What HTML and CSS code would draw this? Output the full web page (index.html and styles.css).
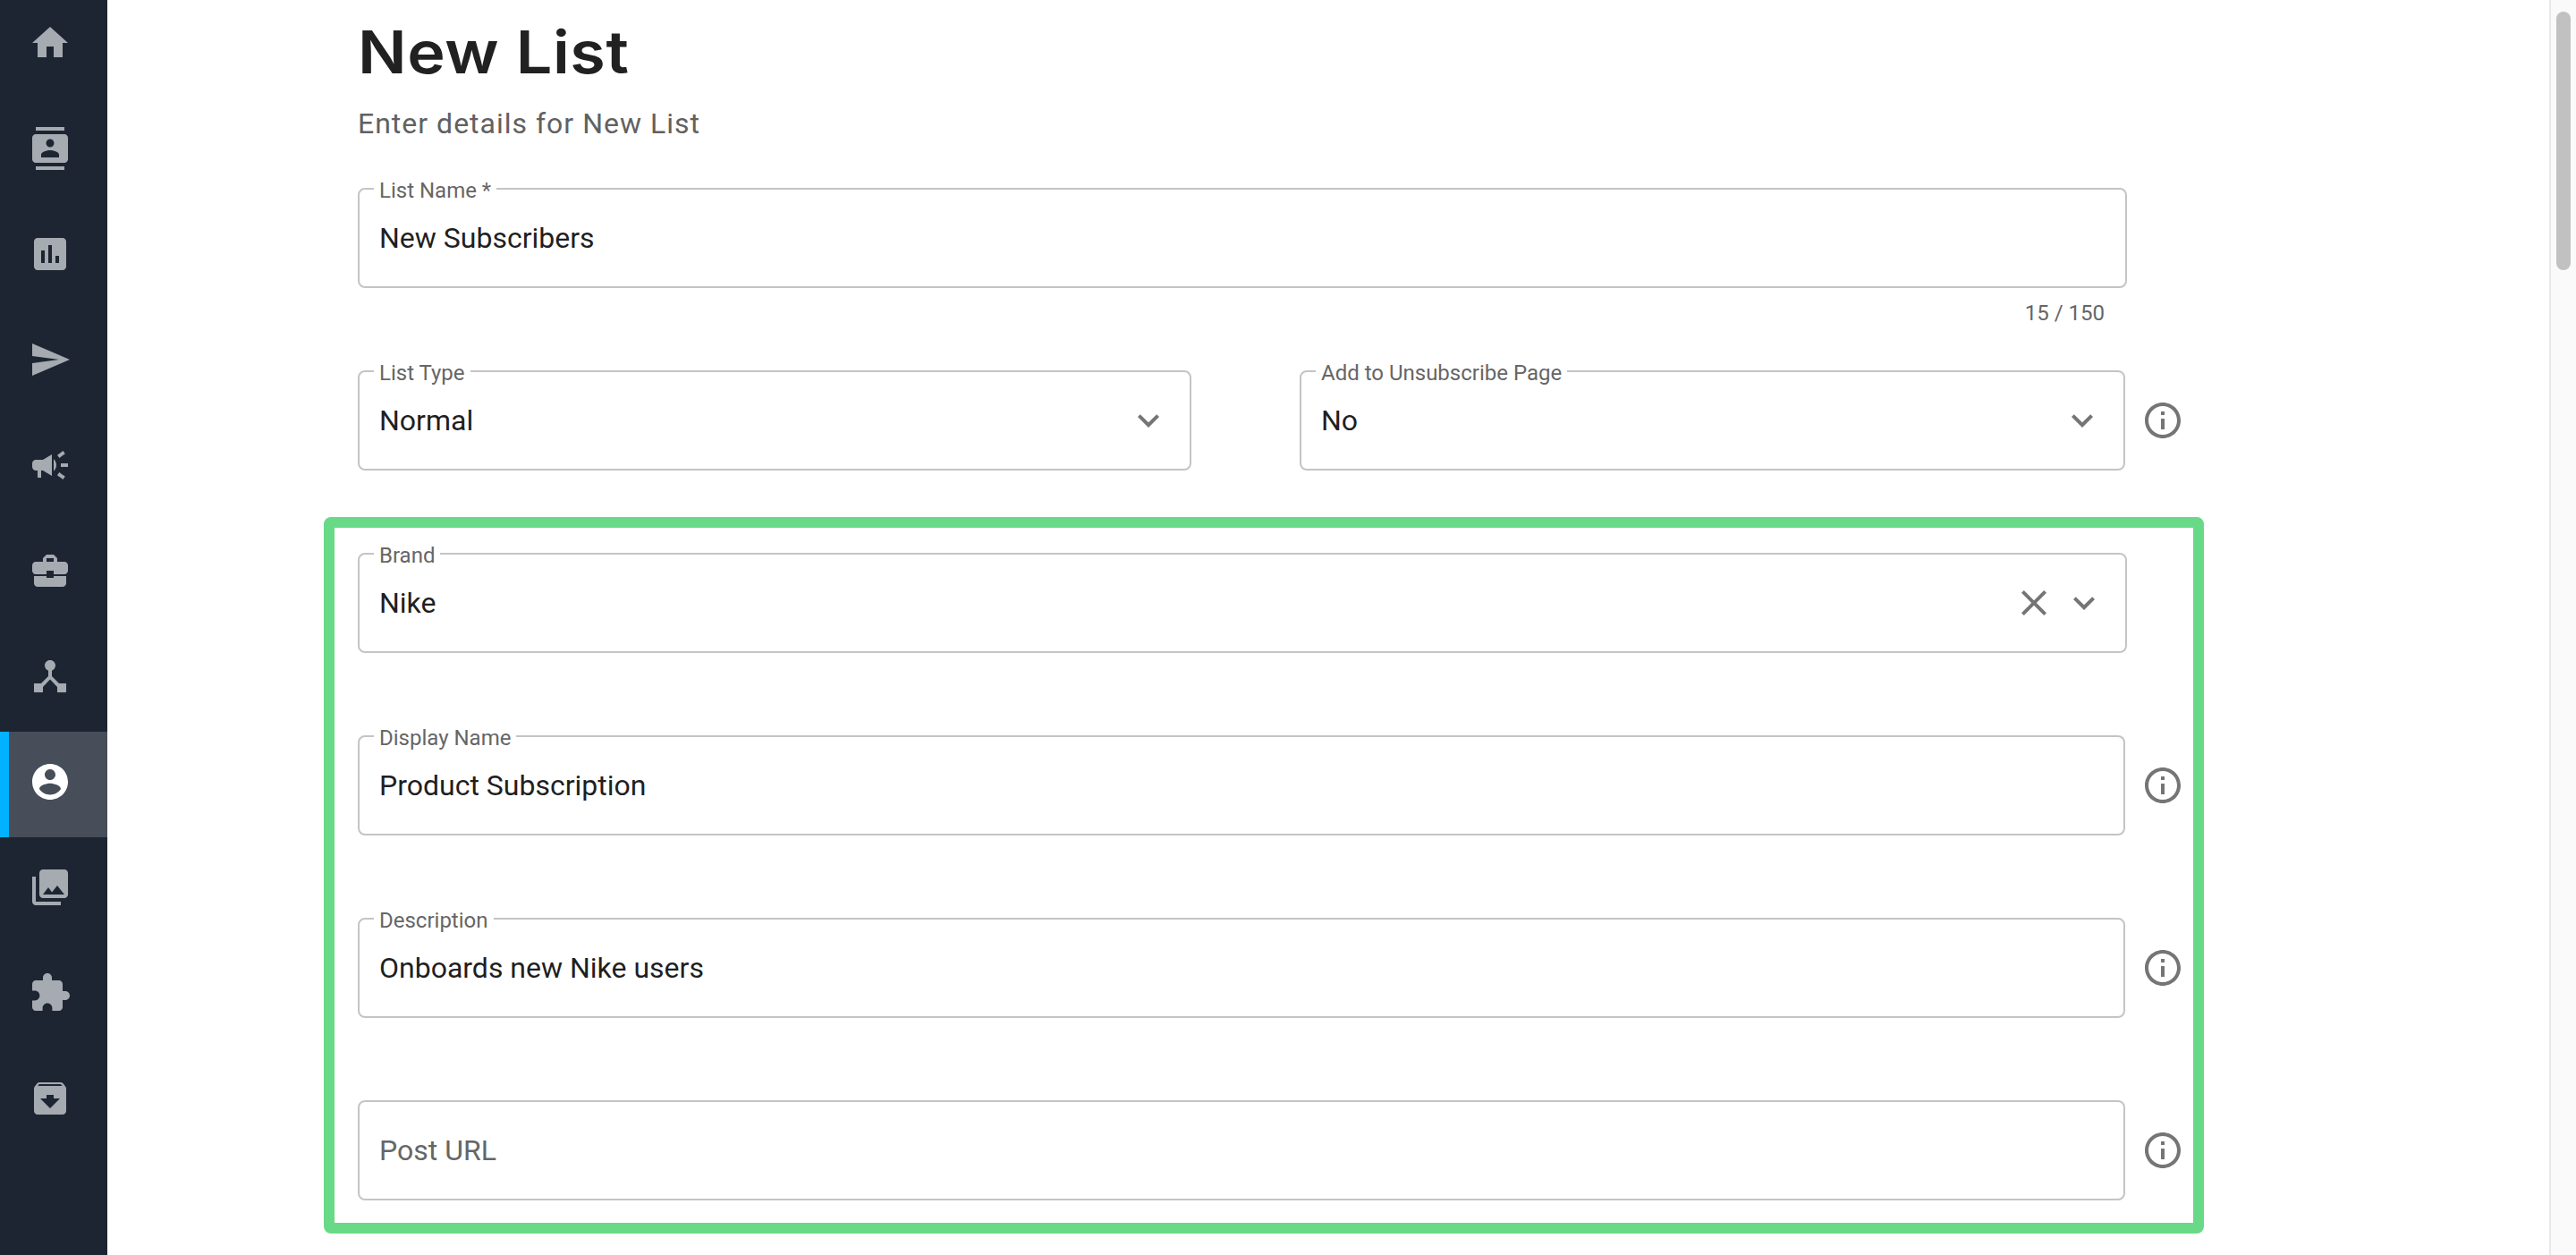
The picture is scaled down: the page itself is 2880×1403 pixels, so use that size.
FILE: index.html
```html
<!DOCTYPE html>
<html lang="en">
<head>
<meta charset="utf-8">
<title>New List</title>
<link rel="stylesheet" href="styles.css">
</head>
<body>
<svg class="defs" aria-hidden="true">
  <symbol id="i-info" viewBox="0 0 24 24"><path d="M11 7h2v2h-2zm0 4h2v6h-2zm1-9C6.48 2 2 6.48 2 12s4.48 10 10 10 10-4.48 10-10S17.52 2 12 2zm0 18c-4.41 0-8-3.59-8-8s3.59-8 8-8 8 3.59 8 8-3.59 8-8 8z"/></symbol>
  <symbol id="i-chevron" viewBox="0 0 24 24"><path d="M16.59 8.59L12 13.17 7.41 8.59 6 10l6 6 6-6z"/></symbol>
  <symbol id="i-close" viewBox="0 0 24 24"><path d="M19 6.41L17.59 5 12 10.59 6.41 5 5 6.41 10.59 12 5 17.59 6.41 19 12 13.41 17.59 19 19 17.59 13.41 12z"/></symbol>
</svg>

<nav class="sidebar">
  <a class="nav-item"><svg class="nav-icon" viewBox="0 0 24 24"><path d="M10 20v-6h4v6h5v-8h3L12 3 2 12h3v8z"/></svg></a>
  <a class="nav-item"><svg class="nav-icon" viewBox="0 0 24 24"><path d="M20 0H4v2h16V0zM4 24h16v-2H4v2zM20 4H4c-1.1 0-2 .9-2 2v12c0 1.1.9 2 2 2h16c1.1 0 2-.9 2-2V6c0-1.1-.9-2-2-2zm-8 2.75c1.24 0 2.25 1.01 2.25 2.25s-1.01 2.25-2.25 2.25S9.75 10.24 9.75 9 10.76 6.75 12 6.75zM17 17H7v-1.5c0-1.67 3.33-2.5 5-2.5s5 .83 5 2.5V17z"/></svg></a>
  <a class="nav-item"><svg class="nav-icon" viewBox="0 0 24 24"><path d="M19 3H5c-1.1 0-2 .9-2 2v14c0 1.1.9 2 2 2h14c1.1 0 2-.9 2-2V5c0-1.1-.9-2-2-2zM9 17H7v-7h2v7zm4 0h-2V7h2v10zm4 0h-2v-4h2v4z"/></svg></a>
  <a class="nav-item"><svg class="nav-icon" viewBox="0 0 24 24"><path d="M2.01 21L23 12 2.01 3 2 10l15 2-15 2z"/></svg></a>
  <a class="nav-item"><svg class="nav-icon" viewBox="0 0 24 24"><path d="M18 11v2h4v-2h-4zm-2 6.61c.96.71 2.21 1.65 3.2 2.39.4-.53.8-1.07 1.2-1.6-.99-.74-2.24-1.68-3.2-2.4-.4.54-.8 1.08-1.2 1.61zM20.4 5.6c-.4-.53-.8-1.07-1.2-1.6-.99.74-2.24 1.68-3.2 2.4.4.53.8 1.07 1.2 1.6.96-.72 2.21-1.65 3.2-2.4zM4 9c-1.1 0-2 .9-2 2v2c0 1.1.9 2 2 2h1v4h2v-4h1l5 3V6L8 9H4zm11.5 3c0-1.33-.58-2.53-1.5-3.35v6.69c.92-.81 1.5-2.01 1.5-3.34z"/></svg></a>
  <a class="nav-item"><svg class="nav-icon" viewBox="0 0 24 24"><path d="M10 16v-1H3.01L3 19c0 1.11.89 2 2 2h14c1.11 0 2-.89 2-2v-4h-7v1h-4zm10-9h-4.01V5l-2-2h-4l-2 2v2H4c-1.1 0-2 .9-2 2v3c0 1.11.89 2 2 2h6v-2h4v2h6c1.1 0 2-.9 2-2V9c0-1.1-.9-2-2-2zm-6 0h-4V5h4v2z"/></svg></a>
  <a class="nav-item"><svg class="nav-icon" viewBox="0 0 24 24"><path d="M17 16l-4-4V8.82C14.16 8.4 15 7.3 15 6c0-1.66-1.34-3-3-3S9 4.34 9 6c0 1.3.84 2.4 2 2.82V12l-4 4H3v5h5v-3.05l4-4.2 4 4.2V21h5v-5h-4z"/></svg></a>
  <a class="nav-item is-active"><svg class="nav-icon" viewBox="0 0 24 24"><path d="M12 2C6.48 2 2 6.48 2 12s4.48 10 10 10 10-4.48 10-10S17.52 2 12 2zm0 3c1.66 0 3 1.34 3 3s-1.34 3-3 3-3-1.34-3-3 1.34-3 3-3zm0 14.2c-2.5 0-4.71-1.28-6-3.22.03-1.99 4-3.08 6-3.08 1.99 0 5.97 1.09 6 3.08-1.29 1.94-3.5 3.22-6 3.22z"/></svg></a>
  <a class="nav-item"><svg class="nav-icon" viewBox="0 0 24 24"><path d="M22 16V4c0-1.1-.9-2-2-2H8c-1.1 0-2 .9-2 2v12c0 1.1.9 2 2 2h12c1.1 0 2-.9 2-2zm-11-4l2.03 2.71L16 11l4 5H8l3-4zM2 6v14c0 1.1.9 2 2 2h14v-2H4V6H2z"/></svg></a>
  <a class="nav-item"><svg class="nav-icon" viewBox="0 0 24 24"><path d="M20.5 11H19V7c0-1.1-.9-2-2-2h-4V3.5C13 2.12 11.88 1 10.5 1S8 2.12 8 3.5V5H4c-1.1 0-1.99.9-1.99 2v3.8H3.5c1.49 0 2.7 1.21 2.7 2.7s-1.21 2.7-2.7 2.7H2V20c0 1.1.9 2 2 2h3.8v-1.5c0-1.49 1.21-2.7 2.7-2.7 1.49 0 2.7 1.21 2.7 2.7V22H17c1.1 0 2-.9 2-2v-4h1.5c1.38 0 2.5-1.12 2.5-2.5S21.88 11 20.5 11z"/></svg></a>
  <a class="nav-item"><svg class="nav-icon" viewBox="0 0 24 24"><path d="M20.54 5.23l-1.39-1.68C18.88 3.21 18.47 3 18 3H6c-.47 0-.88.21-1.16.55L3.46 5.23C3.17 5.57 3 6.02 3 6.5V19c0 1.1.9 2 2 2h14c1.1 0 2-.9 2-2V6.5c0-.48-.17-.93-.46-1.27zM12 17.5L6.5 12H10v-2h4v2h3.5L12 17.5zM5.12 5l.81-1h12l.94 1H5.12z"/></svg></a>
</nav>

<main class="main">
  <h1 class="title">New List</h1>
  <p class="subtitle">Enter details for New List</p>

  <div class="block-name">
    <div class="field field-full">
      <span class="label">List Name *</span>
      <span class="value">New Subscribers</span>
    </div>
    <div class="counter">15 / 150</div>
  </div>

  <div class="row row-selects">
    <div class="field field-type">
      <span class="label">List Type</span>
      <span class="value">Normal</span>
      <svg class="adorn"><use href="#i-chevron"/></svg>
    </div>
    <div class="row row-unsub">
      <div class="field field-unsub">
        <span class="label">Add to Unsubscribe Page</span>
        <span class="value">No</span>
        <svg class="adorn"><use href="#i-chevron"/></svg>
      </div>
      <svg class="info"><use href="#i-info"/></svg>
    </div>
  </div>

  <section class="highlight">
    <div class="field field-full">
      <span class="label">Brand</span>
      <span class="value">Nike</span>
      <svg class="adorn"><use href="#i-close"/></svg>
      <svg class="adorn adorn-next"><use href="#i-chevron"/></svg>
    </div>
    <div class="row">
      <div class="field field-info">
        <span class="label">Display Name</span>
        <span class="value">Product Subscription</span>
      </div>
      <svg class="info"><use href="#i-info"/></svg>
    </div>
    <div class="row">
      <div class="field field-info">
        <span class="label">Description</span>
        <span class="value">Onboards new Nike users</span>
      </div>
      <svg class="info"><use href="#i-info"/></svg>
    </div>
    <div class="row">
      <div class="field field-info">
        <span class="value value-placeholder">Post URL</span>
      </div>
      <svg class="info"><use href="#i-info"/></svg>
    </div>
  </section>
</main>

<div class="scrollbar"><div class="scrollbar-thumb"></div></div>
</body>
</html>
```
FILE: styles.css
```css
html, body {
  height: 100%;
}

body {
  margin: 0;
  display: flex;
  overflow: hidden;
  background: #fff;
  font-family: Roboto, "Liberation Sans", sans-serif;
}

.defs {
  display: none;
}

/* Sidebar */
.sidebar {
  flex: 0 0 120px;
  display: flex;
  flex-direction: column;
  background: #1e2532;
  overflow: hidden;
}

.nav-item {
  flex: 0 0 118px;
  box-sizing: border-box;
  padding: 32px 0 0 32px;
  display: block;
}

.nav-item:first-child {
  flex-basis: 110px;
  padding-top: 24px;
}

.nav-icon {
  display: block;
  width: 48px;
  height: 48px;
  fill: #a6aab1;
}

.is-active {
  background: #474e59;
  border-left: 10px solid #00b2ff;
  padding-left: 22px;
}

.is-active .nav-icon {
  fill: #fff;
}

/* Main column */
.main {
  flex: 1;
  min-width: 0;
  padding-left: 280px;
}

.title {
  width: fit-content;
  margin: 0;
  padding-top: 14px;
  font-family: Inter, "Open Sans", sans-serif;
  font-size: 66px;
  line-height: 88px;
  font-weight: 600;
  letter-spacing: 0.5px;
  color: #212121;
  transform: scaleX(1.09);
  transform-origin: left center;
}

.subtitle {
  margin: 14px 0 0;
  font-size: 32px;
  line-height: 44px;
  letter-spacing: 1px;
  color: #616161;
}

.block-name {
  margin-top: 50px;
  width: 1978px;
  height: 204px;
}

.counter {
  margin-top: 14px;
  padding-right: 25px;
  font-size: 24px;
  line-height: 28px;
  text-align: right;
  color: #666;
}

.row {
  display: flex;
  align-items: center;
  gap: 18px;
}

.row-selects {
  gap: 121px;
}

.row-unsub {
  gap: 18px;
}

/* Outlined fields */
.field {
  position: relative;
  box-sizing: border-box;
  height: 112px;
  display: flex;
  align-items: center;
  padding: 0 22px;
  border: 2px solid #c4c4c4;
  border-radius: 8px;
  background: #fff;
}

.field-full {
  width: 1978px;
}

.field-info {
  width: 1976px;
}

.field-type {
  width: 932px;
}

.field-unsub {
  width: 923px;
}

.label {
  position: absolute;
  top: -13px;
  left: 16px;
  padding: 0 6px;
  background: #fff;
  font-size: 24px;
  line-height: 28px;
  color: #666;
  white-space: nowrap;
}

.value {
  flex: 1;
  font-size: 32px;
  line-height: 40px;
  color: #1f1f1f;
}

.value-placeholder {
  color: #666;
}

.adorn {
  flex: 0 0 48px;
  width: 48px;
  height: 48px;
  fill: #757575;
}

.adorn-next {
  margin-left: 8px;
}

.info {
  flex: 0 0 48px;
  width: 48px;
  height: 48px;
  fill: #757575;
}

/* Highlight box */
.highlight {
  box-sizing: border-box;
  width: 2102px;
  height: 801px;
  margin: 52px 0 0 -38px;
  padding: 28px 10px 0 26px;
  border: 12px solid #68da87;
  border-radius: 8px;
  display: flex;
  flex-direction: column;
  gap: 92px;
}

/* Scrollbar */
.scrollbar {
  flex: 0 0 30px;
  box-sizing: border-box;
  border-left: 2px solid #e8e8e8;
  background: #fafafa;
  padding: 13px 6px 0;
}

.scrollbar-thumb {
  width: 16px;
  height: 289px;
  border-radius: 8px;
  background: #c1c1c1;
}
```
